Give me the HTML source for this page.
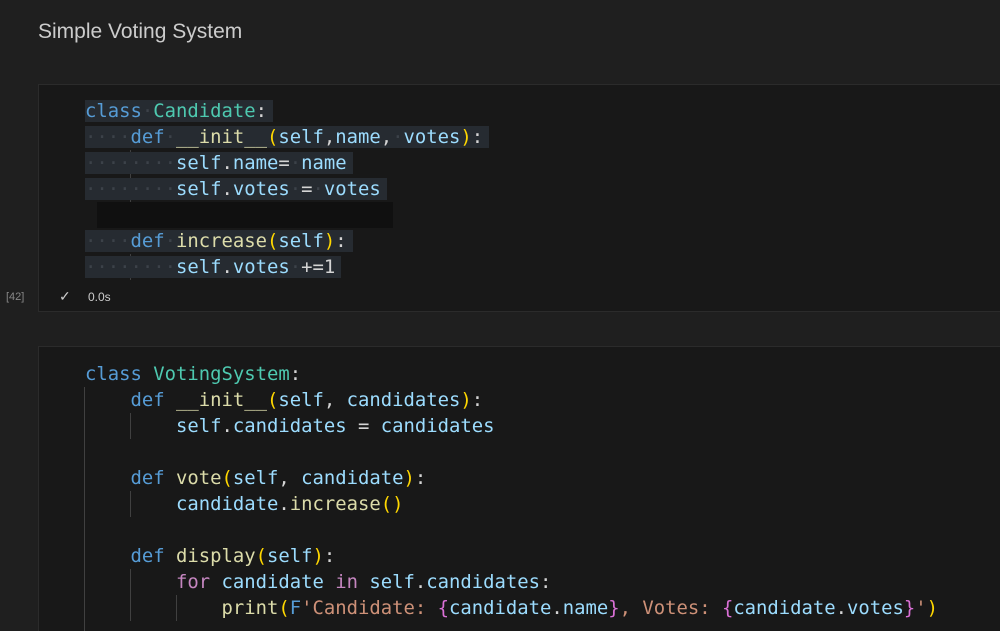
<!DOCTYPE html>
<html><head><meta charset="utf-8"><style>
html,body{margin:0;width:1000px;height:631px;overflow:hidden}
body{background:#1f1f1f;position:relative;font-family:"Liberation Sans",sans-serif}
.title{position:absolute;left:38px;top:20px;font-size:21px;color:#cccccc;font-weight:300}
.cell{position:absolute;left:38px;right:-2px;background:#181818;border:1px solid #2b2b2b}
.code{position:absolute;left:46px;font-family:"DejaVu Sans Mono",monospace;font-size:18.9px;line-height:26px;color:#d4d4d4}
.l{height:26px;white-space:pre}
.sel{background:#262b31;padding-right:6px}
.k{color:#569cd6}.c{color:#4ec9b0}.f{color:#dcdcaa}.v{color:#9cdcfe}.p{color:#ffd700}.m{color:#c586c0}.s{color:#ce9178}.b{color:#da70d6}.d{color:#3c4249}
.g{position:absolute;width:1px;background:#404040}
</style></head><body>
<div class="title">Simple Voting System</div>

<div class="cell" style="top:84px;height:226px">
 <div style="position:absolute;left:58px;top:117px;width:296px;height:26px;background:#101010"></div>
 <div class="g" style="left:91px;top:65px;height:52px"></div>
 <div class="g" style="left:91px;top:169px;height:26px"></div>
 <div class="code" style="top:13px">
<div class="l"><span class="sel"><span class="k">class</span><span class="d">·</span><span class="c">Candidate</span>:</span></div>
<div class="l"><span class="sel"><span class="d">····</span><span class="k">def</span><span class="d">·</span><span class="f">__init__</span><span class="p">(</span><span class="v">self</span>,<span class="v">name</span>,<span class="d">·</span><span class="v">votes</span><span class="p">)</span>:</span></div>
<div class="l"><span class="sel"><span class="d">········</span><span class="v">self</span>.<span class="v">name</span>=<span class="d">·</span><span class="v">name</span></span></div>
<div class="l"><span class="sel"><span class="d">········</span><span class="v">self</span>.<span class="v">votes</span><span class="d">·</span>=<span class="d">·</span><span class="v">votes</span></span></div>
<div class="l"> </div>
<div class="l"><span class="sel"><span class="d">····</span><span class="k">def</span><span class="d">·</span><span class="f">increase</span><span class="p">(</span><span class="v">self</span><span class="p">)</span>:</span></div>
<div class="l"><span class="sel"><span class="d">········</span><span class="v">self</span>.<span class="v">votes</span><span class="d">·</span>+=1</span></div>
 </div>
 <div style="position:absolute;left:20px;top:203px;font-size:14px;color:#ccc">✓</div>
 <div style="position:absolute;left:49px;top:205px;font-size:12px;color:#ccc">0.0s</div>
</div>
<div style="position:absolute;left:6px;top:291px;font-size:11px;color:#888">[42]</div>

<div class="cell" style="top:346px;height:300px">
 <div class="g" style="left:45px;top:40px;height:250px"></div>
 <div class="g" style="left:91px;top:66px;height:26px"></div>
 <div class="g" style="left:91px;top:144px;height:26px"></div>
 <div class="g" style="left:91px;top:222px;height:52px"></div>
 <div class="g" style="left:137px;top:248px;height:26px"></div>
 <div class="code" style="top:14px">
<div class="l"><span class="k">class</span> <span class="c">VotingSystem</span>:</div>
<div class="l">    <span class="k">def</span> <span class="f">__init__</span><span class="p">(</span><span class="v">self</span>, <span class="v">candidates</span><span class="p">)</span>:</div>
<div class="l">        <span class="v">self</span>.<span class="v">candidates</span> = <span class="v">candidates</span></div>
<div class="l"> </div>
<div class="l">    <span class="k">def</span> <span class="f">vote</span><span class="p">(</span><span class="v">self</span>, <span class="v">candidate</span><span class="p">)</span>:</div>
<div class="l">        <span class="v">candidate</span>.<span class="f">increase</span><span class="p">()</span></div>
<div class="l"> </div>
<div class="l">    <span class="k">def</span> <span class="f">display</span><span class="p">(</span><span class="v">self</span><span class="p">)</span>:</div>
<div class="l">        <span class="m">for</span> <span class="v">candidate</span> <span class="m">in</span> <span class="v">self</span>.<span class="v">candidates</span>:</div>
<div class="l">            <span class="f">print</span><span class="p">(</span><span class="k">F</span><span class="s">'Candidate: </span><span class="b">{</span><span class="v">candidate</span>.<span class="v">name</span><span class="b">}</span><span class="s">, Votes: </span><span class="b">{</span><span class="v">candidate</span>.<span class="v">votes</span><span class="b">}</span><span class="s">'</span><span class="p">)</span></div>
 </div>
</div>
</body></html>
